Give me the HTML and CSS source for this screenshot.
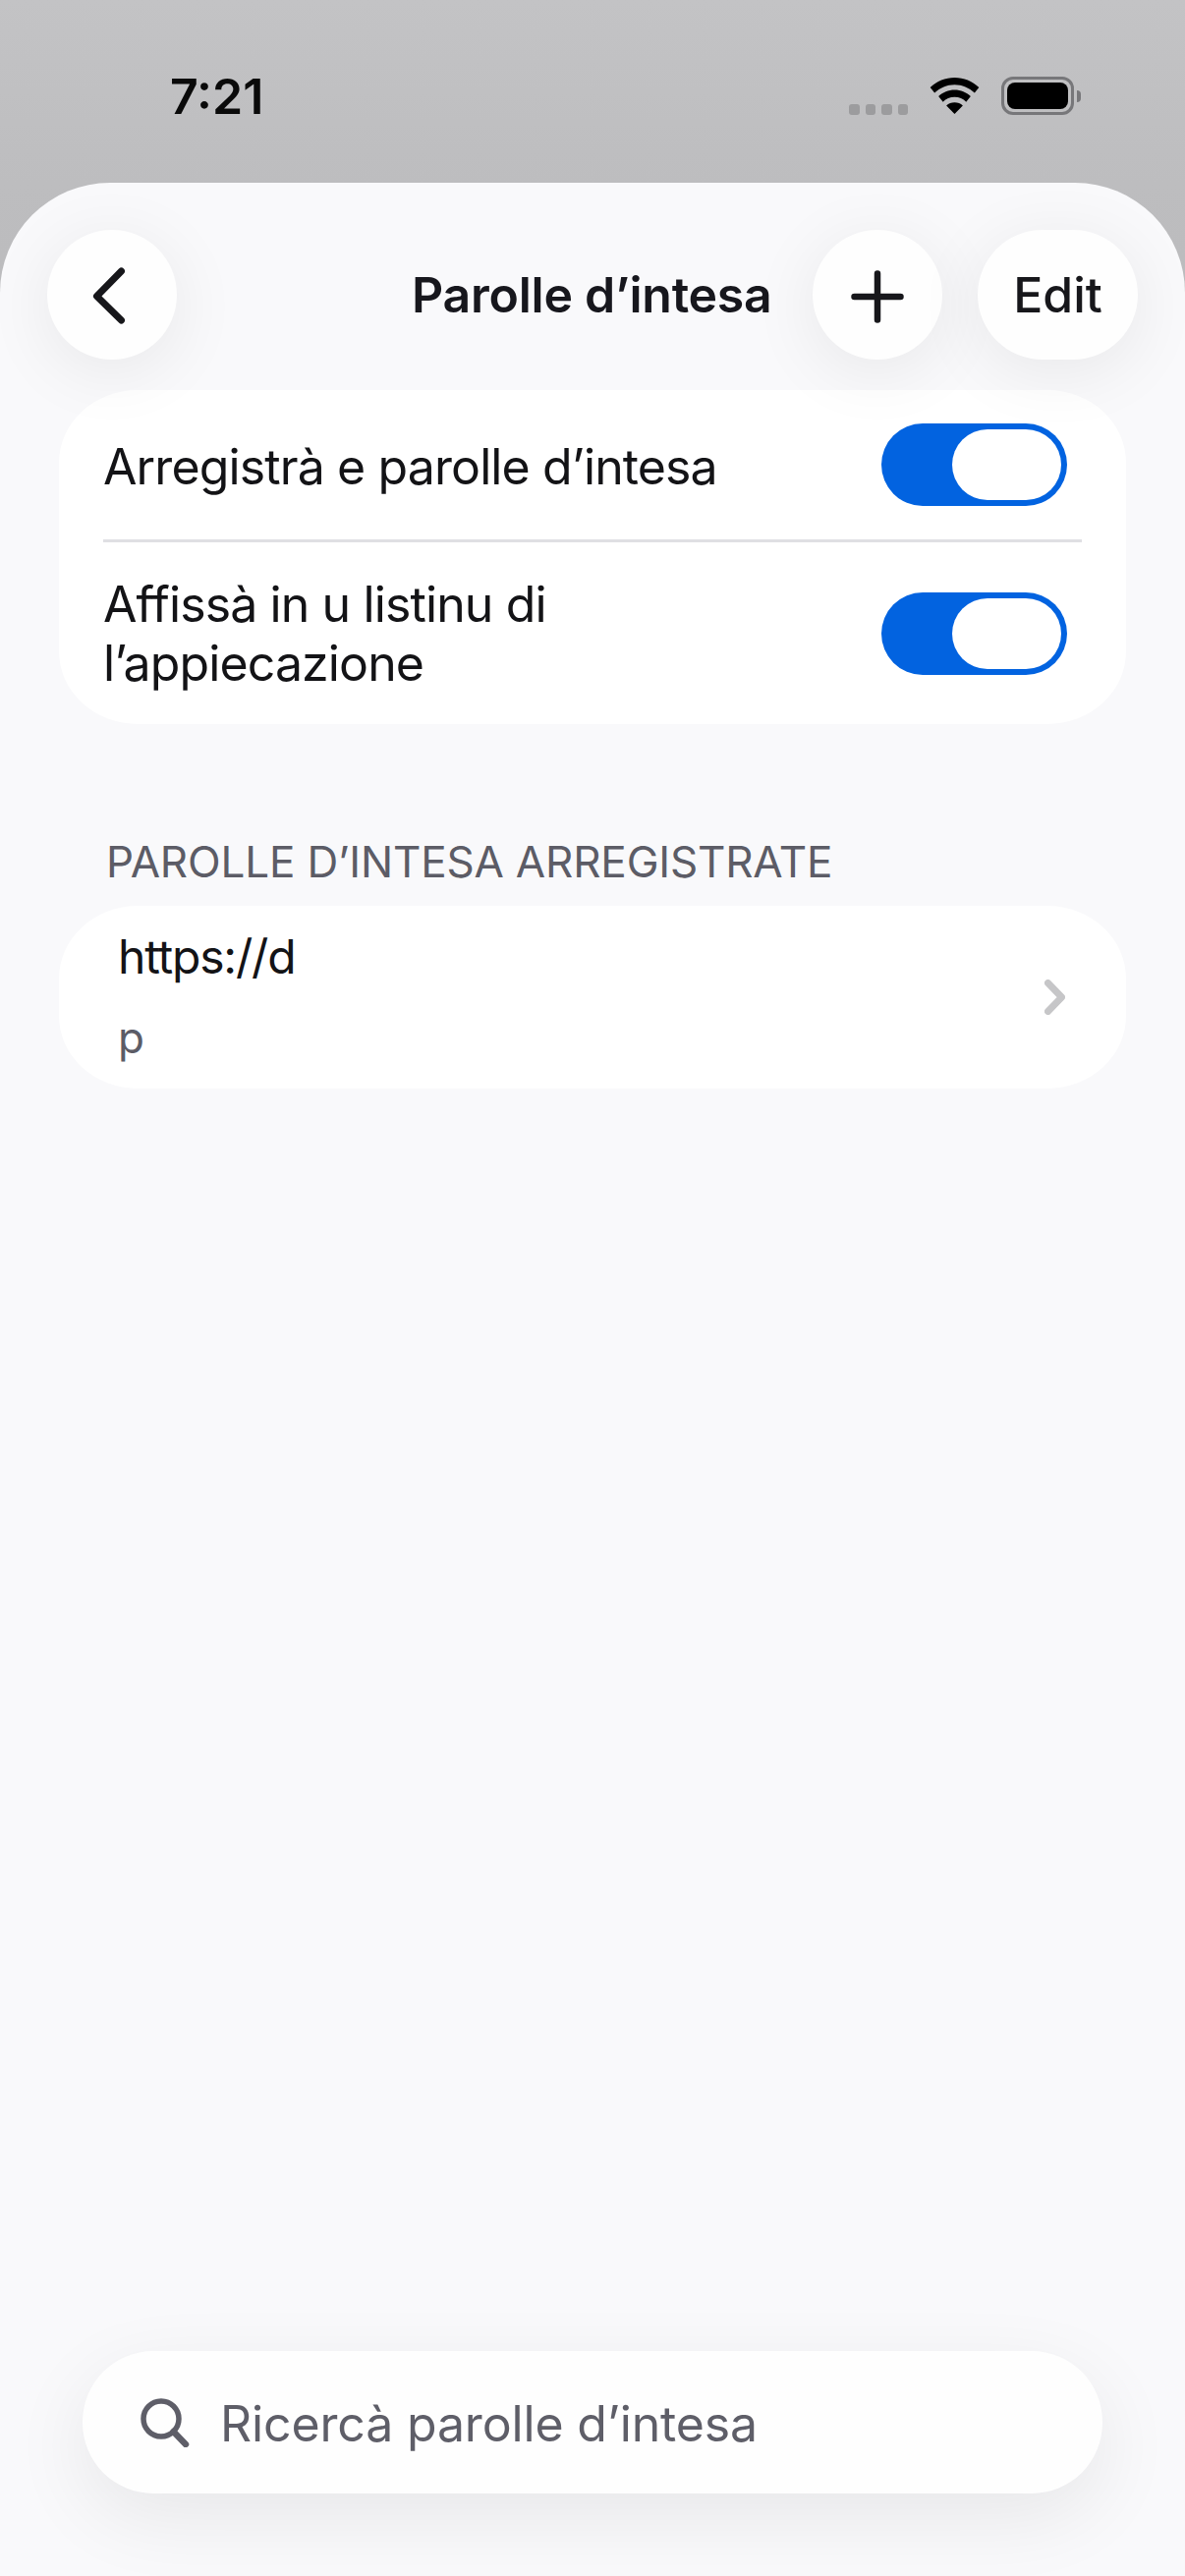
FILE: index.html
```html
<!DOCTYPE html>
<html lang="co">
<head>
<meta charset="utf-8">
<title>Parolle d’intesa</title>
<link rel="stylesheet" href="styles.css">
</head>
<body>
<div class="phone">
  <header class="status">
    <span class="clock">7:21</span>
    <div class="status-icons">
      <div class="signal"><i></i><i></i><i></i><i></i></div>
      <svg class="wifi" viewBox="0 0 51 38" width="51" height="37">
        <path d="M25.5 0C15.8 0 7 3.7 0 10.2l4.6 5.8C10.300 10.600 17.500 7.400 25.500 7.400S40.700 10.600 46.400 16l4.600-5.800C44 3.700 35.200 0 25.500 0Z"/>
        <path d="M25.500 12.800c-6.500 0-12.300 2.500-16.800 6.600l4.700 5.900c3.100-3 7.300-4.900 12.100-4.900s9 1.900 12.100 4.900l4.700-5.900c-4.500-4.100-10.300-6.600-16.800-6.600Z"/>
        <path d="M25.500 26c-3.400 0-6.300 1.200-8.600 3.300L25.500 38l8.600-8.700C31.800 27.200 28.900 26 25.500 26Z"/>
      </svg>
      <div class="battery"><div class="battery-body"><div class="battery-fill"></div></div><div class="battery-cap"></div></div>
    </div>
  </header>

  <main class="sheet">
    <nav class="nav">
      <button class="round back" type="button" aria-label="Back">
        <svg viewBox="0 0 34 58" width="34" height="58"><path d="M29.500 4 4.500 29.500 29.500 54" fill="none" stroke="#17171b" stroke-width="7" stroke-linecap="round" stroke-linejoin="round"/></svg>
      </button>
      <h1 class="title">Parolle d’intesa</h1>
      <button class="round add" type="button" aria-label="Add">
        <svg viewBox="0 0 54 54" width="54" height="54"><path d="M27 3.500v47M3.500 27h47" fill="none" stroke="#17171b" stroke-width="6.500" stroke-linecap="round"/></svg>
      </button>
      <button class="round edit" type="button">Edit</button>
    </nav>

    <section class="card settings">
      <div class="row row-one">
        <span class="label">Arregistrà e parolle d’intesa</span>
        <span class="toggle"><span class="thumb"></span></span>
      </div>
      <div class="rule"></div>
      <div class="row row-two">
        <span class="label">Affissà in u listinu di<br>l’appiecazione</span>
        <span class="toggle"><span class="thumb"></span></span>
      </div>
    </section>

    <h2 class="section-title">PAROLLE D’INTESA ARREGISTRATE</h2>

    <section class="card entry">
      <div class="entry-text">
        <span class="site">https://d</span>
        <span class="user">p</span>
      </div>
      <svg class="chevron" viewBox="0 0 21 36" width="21" height="36"><path d="M3.500 3.500 17.500 18 3.500 32.500" fill="none" stroke="#c6c6c8" stroke-width="7" stroke-linecap="round" stroke-linejoin="round"/></svg>
    </section>

    <div class="search">
      <svg class="search-icon" viewBox="0 0 50 50" width="50" height="50"><circle cx="21" cy="21" r="18" fill="none" stroke="#5e5e68" stroke-width="5.500"/><path d="M33.500 34 46 47" fill="none" stroke="#5e5e68" stroke-width="6.500" stroke-linecap="round"/></svg>
      <span class="search-text">Ricercà parolle d’intesa</span>
    </div>
  </main>
</div>
</body>
</html>
```

FILE: styles.css
```css
* { box-sizing: border-box; }

html, body {
  margin: 0;
  padding: 0;
}

body {
  font-family: Inter, "Liberation Sans", sans-serif;
  color: #17171b;
  background: #f9f9fb;
}

.phone {
  width: 1206px;
  height: 2622px;
  display: flex;
  flex-direction: column;
  overflow: hidden;
  background: linear-gradient(#c3c3c5 0, #bdbdbf 186px, #bbbbbd 340px);
}

/* Status bar */
.status {
  height: 186px;
  flex: none;
  display: flex;
  align-items: flex-start;
  justify-content: space-between;
  padding: 0 106px 0 173px;
}

.clock {
  margin-top: 68px;
  font-size: 50px;
  line-height: 60px;
  font-weight: 600;
  color: #0a0a0a;
}

.status-icons {
  display: flex;
  align-items: flex-start;
  margin-top: 78px;
}

.signal {
  display: flex;
  gap: 6px;
  margin-top: 28px;
}

.signal i {
  width: 10.500px;
  height: 11px;
  border-radius: 3px;
  background: #9c9c9e;
}

.wifi {
  margin: 1px 22px 0;
  fill: #000;
}

.battery {
  display: flex;
  align-items: center;
}

.battery-body {
  width: 74px;
  height: 39px;
  border: 3px solid #77777a;
  border-radius: 12px;
  padding: 3px;
}

.battery-fill {
  height: 100%;
  border-radius: 8px;
  background: #000;
}

.battery-cap {
  width: 4px;
  height: 12px;
  margin-left: 3px;
  border-radius: 0 7px 7px 0;
  background: #77777a;
}

/* Sheet */
.sheet {
  flex: 1;
  display: flex;
  flex-direction: column;
  border-radius: 112px 112px 0 0;
  background: #f9f9fb;
  padding-top: 48px;
}

/* The nav floats above the list, so its button shadows fall over the first card */
.nav {
  height: 132px;
  flex: none;
  display: flex;
  align-items: center;
  padding: 0 48px;
  position: relative;
  z-index: 1;
}

.round {
  width: 132px;
  height: 132px;
  flex: none;
  border: 0;
  padding: 0;
  border-radius: 66px;
  background: #fefefe;
  box-shadow: 0 12px 70px rgba(0, 0, 0, 0.075);
  display: flex;
  align-items: center;
  justify-content: center;
  font-family: inherit;
  color: #17171b;
}

.back svg {
  margin: 2px 0 0 -7px;
}

.add svg {
  margin-top: 3px;
}

.title {
  flex: 1;
  margin: 0 0 0 239px;
  font-size: 50px;
  line-height: 60px;
  font-weight: 600;
  letter-spacing: -0.25px;
  color: #17171d;
  white-space: nowrap;
}

.edit {
  width: 163px;
  margin-left: 36px;
  font-size: 50px;
  font-weight: 500;
}

/* Grouped cards */
.card {
  flex: none;
  margin: 0 60px;
  background: #fff;
  border-radius: 80px / 74px;
}

.settings {
  margin-top: 31px;
  height: 340px;
}

.row {
  display: flex;
  align-items: center;
  justify-content: space-between;
  padding: 0 60px 0 45px;
}

.row-one { height: 152px; }
.row-two { height: 185px; }

.row-one .label {
  padding-top: 4px;
}

.label {
  font-size: 50px;
  line-height: 60px;
  font-weight: 400;
  letter-spacing: -0.88px;
  color: #131316;
}

.toggle {
  width: 189px;
  height: 84px;
  flex: none;
  display: flex;
  justify-content: flex-end;
  align-items: center;
  padding-right: 6px;
  border-radius: 42px;
  background: #0263e0;
}

.thumb {
  width: 111px;
  height: 72px;
  border-radius: 36px;
  background: #fff;
}

.rule {
  height: 3px;
  margin: 0 45px;
  background: #dfdfe3;
}

.section-title {
  flex: none;
  margin: 114px 0 0 108px;
  font-size: 44px;
  line-height: 52px;
  font-weight: 400;
  letter-spacing: -0.17px;
  color: #5c5c66;
}

.entry {
  margin-top: 19px;
  height: 186px;
  display: flex;
  align-items: center;
  justify-content: space-between;
  padding: 0 62px 0 60px;
}

.entry-text {
  display: flex;
  flex-direction: column;
  align-self: flex-start;
  margin-top: 22px;
}

.site {
  font-size: 48px;
  line-height: 60px;
  letter-spacing: -1.2px;
  color: #131316;
}

.user {
  margin-top: 26px;
  font-size: 44px;
  line-height: 52px;
  color: #5c5c66;
}

/* Search field pinned to the bottom of the sheet */
.search {
  flex: none;
  margin: auto 84px 84px;
  height: 145px;
  display: flex;
  align-items: center;
  padding-left: 59px;
  border-radius: 72px;
  background: #fefefe;
  box-shadow: 0 24px 80px rgba(0, 0, 0, 0.075);
}

.search-icon {
  flex: none;
  margin-right: 31px;
}

.search-text {
  padding-top: 2px;
  font-size: 50px;
  line-height: 60px;
  letter-spacing: -0.15px;
  color: #5e5e68;
}
```
